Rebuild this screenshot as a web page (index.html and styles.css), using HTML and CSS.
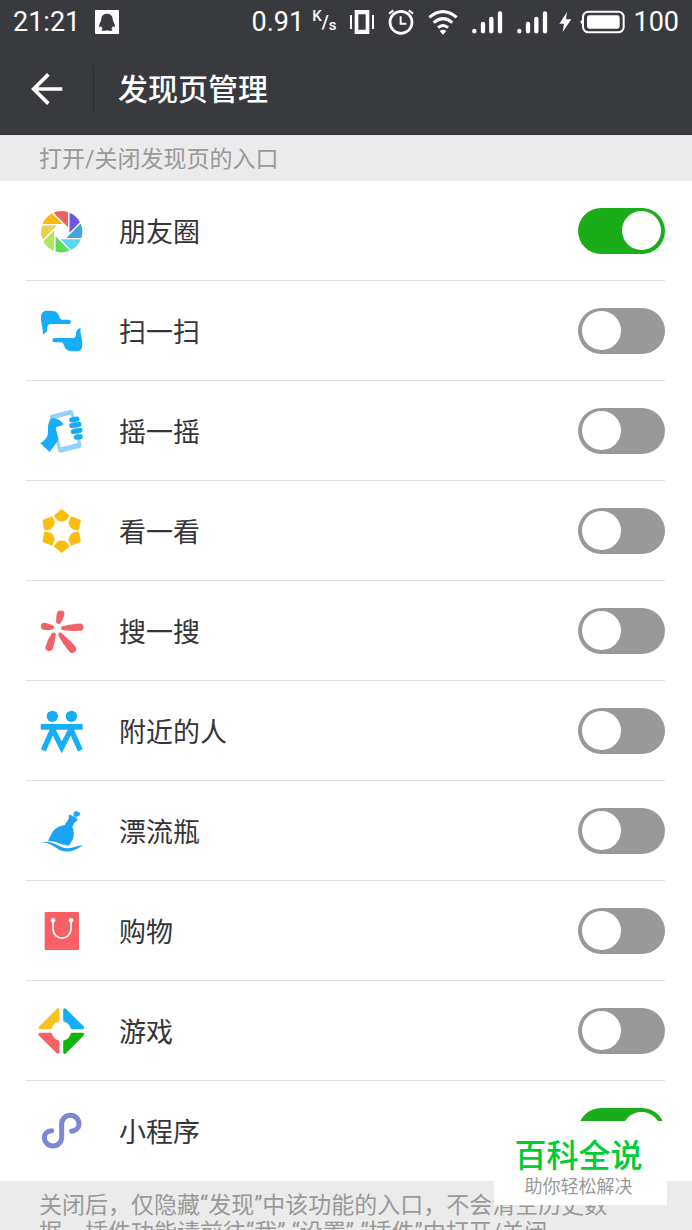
FILE: index.html
```html
<!DOCTYPE html>
<html lang="zh-CN">
<head>
  <meta charset="UTF-8">
  <meta name="viewport" content="width=device-width, initial-scale=1.0">
  <title>发现页管理</title>
  <link rel="stylesheet" href="styles.css">
</head>
<body>
  <div class="app">
    <header class="top">
      <div class="status-bar">
        <span>21:21</span>
        <svg class="qq-icon" width="24" height="24" viewBox="0 0 72 72">
          <rect width="72" height="72" rx="2" fill="#fff"></rect>
          <path d="M36 11c-12 0-17 8-17 17 0 5-7 13-7 22 0 3 3 2 6-2 1 3 3 6 5 8-4 1-5 5-1 6h11l3-2 3 2h11c4-1 3-5-1-6 2-2 4-5 5-8 3 4 6 5 6 2 0-9-7-17-7-22 0-9-5-17-17-17z" fill="#393a3e"></path>
        </svg>
        <div class="status-right">
          <span>0.91</span>
          <span class="speed-unit"><span class="unit-top">K</span><span class="unit-slash">/</span><span class="unit-bottom">s</span></span>
          <svg width="24" height="24" viewBox="0 0 72 72" fill="#fff">
            <path d="M0 15h6v42H0zM66 15h6v42h-6z"></path>
            <path fill-rule="evenodd" d="M14 0h44v72H14zM25 13v46h22V13z"></path>
          </svg>
          <svg class="alarm-icon" width="26" height="26" viewBox="0 0 78 78" fill="none" stroke="#fff" stroke-width="8">
            <circle cx="39" cy="40" r="33"></circle>
            <path d="M38 22v22h17" stroke-width="6"></path>
            <path d="M3 14L16 4M75 14L62 4" stroke-width="6"></path>
          </svg>
          <svg class="wifi-icon" width="30" height="25" viewBox="0 0 90 75" fill="none" stroke="#fff" stroke-width="9">
            <path d="M4 22Q45-12 86 22M17 38Q45 14 73 38M30 53Q45 40 60 53"></path>
            <path d="M35 63Q45 55 55 63L45 74z" fill="#fff" stroke="none"></path>
          </svg>
          <svg class="signal" width="31" height="23" viewBox="0 0 93 69" stroke="#fff" stroke-width="13" stroke-linecap="round">
            <path d="M7 60v1M33 39v22M58 24v37M84 7v54"></path>
          </svg>
          <svg class="signal" width="31" height="23" viewBox="0 0 93 69" stroke="#fff" stroke-width="13" stroke-linecap="round">
            <path d="M7 60v1M33 39v22M58 24v37M84 7v54"></path>
          </svg>
          <svg class="bolt" width="13" height="20" viewBox="0 0 39 60" fill="#fff">
            <path d="M24 0L1 35h14L11 60 37 22H21z"></path>
          </svg>
          <svg class="battery" width="45" height="24" viewBox="0 0 135 72">
            <path d="M9 24L1 36l8 12z" fill="#fff"></path>
            <rect x="9" y="5" width="122" height="62" rx="16" fill="none" stroke="#fff" stroke-width="6"></rect>
            <rect x="21" y="16" width="98" height="40" rx="7" fill="#fff"></rect>
          </svg>
          <span>100</span>
        </div>
      </div>
      <div class="title-bar">
        <button class="back" type="button" aria-label="返回">
          <svg width="32" height="32" viewBox="0 0 96 96" fill="none" stroke="#fff" stroke-width="11">
            <path d="M52 4L8 48l44 44M8 48h86"></path>
          </svg>
        </button>
        <h1>发现页管理</h1>
      </div>
    </header>

    <main>
      <p class="hint">打开/关闭发现页的入口</p>
      <ul class="list">
        <li class="row">
          <svg class="icon" viewBox="0 0 138 138">
            <defs><path id="blade" d="M21 8.700V-60.500A64 64 0 0 1 57.600-27.900z"></path></defs>
            <g transform="translate(71 71)" stroke="#fff" stroke-width="4">
              <use href="#blade" fill="#7055df"></use>
              <use href="#blade" fill="#3fa5df" transform="rotate(45)"></use>
              <use href="#blade" fill="#5bd8ea" transform="rotate(90)"></use>
              <use href="#blade" fill="#59df5c" transform="rotate(135)"></use>
              <use href="#blade" fill="#aee85c" transform="rotate(180)"></use>
              <use href="#blade" fill="#e8d350" transform="rotate(225)"></use>
              <use href="#blade" fill="#f9b916" transform="rotate(270)"></use>
              <use href="#blade" fill="#ee6062" transform="rotate(315)"></use>
            </g>
          </svg>
          <label for="moments">朋友圈</label>
          <input class="switch" type="checkbox" id="moments" checked>
        </li>
        <li class="row">
          <svg class="icon" viewBox="0 0 138 138" fill="#18adf7">
            <path id="hand" d="M14 79C17 64 9 49 9 31 9 14 14 8 27 8c14 0 25-1 33 9 5 7 4 14 10 18h22c9 0 9 13 0 13H43c-12 0-15 3-15 13 0 9-4 15-14 18z"></path>
            <use href="#hand" transform="rotate(180 71 69)"></use>
          </svg>
          <label for="scan">扫一扫</label>
          <input class="switch" type="checkbox" id="scan">
        </li>
        <li class="row">
          <svg class="icon" viewBox="0 0 138 138" fill="#18adf7">
            <g transform="rotate(-14 83 70)">
              <rect x="47" y="11" width="72" height="118" rx="9" fill="#94d3f7"></rect>
              <rect x="57" y="25" width="53" height="88" fill="#fff"></rect>
            </g>
            <path d="M39 32C51 27 68 35 76 48c-7 9-18 5-22 11-4 10 11 27 5 40L35 132 7 106c16-11 23-20 23-35 0-11-2-25 9-39z"></path>
            <g stroke="#18adf7" stroke-width="15" stroke-linecap="round">
              <path d="M101 36l16-3M101 53l22-4M106 71l20-4M115 88l12-2"></path>
            </g>
          </svg>
          <label for="shake">摇一摇</label>
          <input class="switch" type="checkbox" id="shake">
        </li>
        <li class="row">
          <svg class="icon" viewBox="0 0 138 138">
            <defs><path id="petal" d="M0-65L23-46 12-32Q0-26-12-32L-23-46z"></path></defs>
            <g transform="translate(71 69)" fill="#fabd0b" stroke="#fabd0b" stroke-width="2" stroke-linejoin="round">
              <use href="#petal"></use>
              <use href="#petal" transform="rotate(60)"></use>
              <use href="#petal" transform="rotate(120)"></use>
              <use href="#petal" transform="rotate(180)"></use>
              <use href="#petal" transform="rotate(240)"></use>
              <use href="#petal" transform="rotate(300)"></use>
            </g>
          </svg>
          <label for="look">看一看</label>
          <input class="switch" type="checkbox" id="look">
        </li>
        <li class="row">
          <svg class="icon" viewBox="0 0 138 138" fill="#f06268" stroke="#f06268" stroke-width="7" stroke-linejoin="round">
            <path d="M61 14c2-5 15-4 15 3 0 8-6 16-10 25-2 4-8 3-8-1 0-9 0-20 3-27z"></path>
            <path d="M16 48c8-2 18 3 26 7 4 2 3 6-1 7-10 1-20 2-26-1-5-3-4-11 1-13z"></path>
            <path d="M75 58c17-4 37-8 51-8 9 0 9 15 0 15-15 1-35 0-51-2-3-1-3-4 0-5z"></path>
            <path d="M43 79c3-4 8-2 7 3-2 13-5 28-9 39-3 8-17 5-15-4 3-12 10-27 17-38z"></path>
            <path d="M67 77c12 10 30 26 42 40 7 9-5 19-12 12C85 115 73 97 65 82c-1-4 0-6 2-5z"></path>
          </svg>
          <label for="search">搜一搜</label>
          <input class="switch" type="checkbox" id="search">
        </li>
        <li class="row">
          <svg class="icon" viewBox="0 0 138 138" fill="#18adf7">
            <circle cx="43" cy="25" r="17"></circle>
            <circle cx="100" cy="25" r="17"></circle>
            <rect x="8" y="48" width="126" height="17" rx="3"></rect>
            <path d="M16 127L44 64l27 54 28-54 28 63" fill="none" stroke="#18adf7" stroke-width="16"></path>
          </svg>
          <label for="nearby">附近的人</label>
          <input class="switch" type="checkbox" id="nearby">
        </li>
        <li class="row">
          <svg class="icon" viewBox="0 0 138 138" fill="#18a4f2">
            <path d="M107 13l9-5 3 5 6 0 1 8-10 5 0 4-9-6z"></path>
            <path d="M94 19l25 14-4 8-4 0-8 15c6 14 6 28 0 40l-10 17c-18-2-34-12-63-15 4-8 8-15 12-23 7-13 21-21 38-24l13-20-1-3z"></path>
            <path d="M5 103c42-9 61 20 85 18 15-1 29-8 45-10-26 20-48 24-68 16C46 116 34 101 5 103z"></path>
          </svg>
          <label for="bottle">漂流瓶</label>
          <input class="switch" type="checkbox" id="bottle">
        </li>
        <li class="row">
          <svg class="icon" viewBox="0 0 138 138">
            <rect x="20" y="12" width="103" height="114" rx="4" fill="#f76064"></rect>
            <path d="M45 37v24c0 39 54 39 54 0V37" fill="none" stroke="#fff" stroke-width="5"></path>
            <circle cx="45" cy="37" r="7" fill="#fff"></circle>
            <circle cx="99" cy="37" r="7" fill="#fff"></circle>
          </svg>
          <label for="shopping">购物</label>
          <input class="switch" type="checkbox" id="shopping">
        </li>
        <li class="row">
          <svg class="icon" viewBox="0 0 138 138">
            <defs><path id="quarter" d="M-10-64V-32A32 32 0 0 0-32-10H-64z"></path></defs>
            <g transform="translate(70 69)" stroke-width="9" stroke-linejoin="round">
              <use href="#quarter" fill="#fac21e" stroke="#fac21e"></use>
              <use href="#quarter" fill="#18adf7" stroke="#18adf7" transform="rotate(90)"></use>
              <use href="#quarter" fill="#10b510" stroke="#10b510" transform="rotate(180)"></use>
              <use href="#quarter" fill="#f76064" stroke="#f76064" transform="rotate(270)"></use>
            </g>
          </svg>
          <label for="games">游戏</label>
          <input class="switch" type="checkbox" id="games">
        </li>
        <li class="row">
          <svg class="icon" viewBox="0 0 138 138" fill="none" stroke="#7d87d5" stroke-width="15" stroke-linecap="round">
            <path d="M41 68C28 69 19 77 19 88a26 26 0 0 0 52 0V48a26 26 0 0 1 52 0c0 11-9 20-22 22"></path>
          </svg>
          <label for="mini">小程序</label>
          <input class="switch" type="checkbox" id="mini" checked>
        </li>
      </ul>
      <p class="note">关闭后，仅隐藏“发现”中该功能的入口，不会清空历史数据。插件功能请前往“我”-“设置”-“插件”中打开/关闭</p>
    </main>

    <aside class="watermark">
      <strong>百科全说</strong>
      <span>助你轻松解决</span>
    </aside>
  </div>
</body>
</html>
```
FILE: styles.css
```css
* {
  margin: 0;
  padding: 0;
  box-sizing: border-box;
}

body {
  font-family: Roboto, "Noto Sans CJK SC", sans-serif;
  background-color: #ebebeb;
  color: #353535;
}

.app {
  position: relative;
  height: 100vh;
  overflow: hidden;
}

.top {
  background-color: #393a3e;
  border-bottom: 1px solid #2e2f32;
  color: #fff;
}

.status-bar {
  display: flex;
  align-items: center;
  height: 44px;
  padding: 0 13px;
  font-size: 27px;
  font-weight: 400;
  line-height: 44px;
}

.qq-icon {
  margin-left: 15px;
}

.status-right {
  display: flex;
  align-items: center;
  gap: 14px;
  margin-left: auto;
}

.speed-unit {
  display: flex;
  align-items: center;
  margin-left: -6px;
  font-size: 15px;
  font-weight: 500;
  line-height: 20px;
}

.unit-top {
  padding-bottom: 12px;
}

.unit-slash {
  font-size: 18px;
}

.unit-bottom {
  padding-top: 6px;
}

.bolt {
  margin-left: -3px;
  margin-right: -6px;
}

.battery {
  margin-right: -6px;
}

.title-bar {
  display: flex;
  align-items: center;
  height: 90px;
}

.back {
  display: flex;
  align-items: center;
  width: 94px;
  height: 48px;
  padding-left: 31px;
  border: none;
  border-right: 1px solid #2e2f33;
  background: none;
  cursor: pointer;
}

h1 {
  padding-top: 2px;
  padding-left: 24px;
  font-size: 30px;
  font-weight: 500;
  line-height: 40px;
}

.hint {
  padding: 4px 39px 0;
  font-size: 23px;
  line-height: 42px;
  color: #999;
}

.list {
  padding: 0 27px 0 26px;
  background-color: #fff;
  list-style: none;
}

.row {
  display: flex;
  align-items: center;
  height: 100px;
  padding-left: 12px;
  border-bottom: 1px solid #e2e2e2;
}

.row:last-child {
  border-bottom: none;
}

.icon {
  width: 46px;
  height: 46px;
}

.row label {
  flex: 1;
  padding-top: 4px;
  padding-left: 35px;
  font-size: 27px;
  line-height: 40px;
}

.switch {
  display: flex;
  align-items: center;
  width: 87px;
  height: 46px;
  padding: 0 4px;
  border-radius: 23px;
  background-color: #999;
  appearance: none;
  cursor: pointer;
}

.switch::before {
  content: "";
  width: 39px;
  height: 39px;
  border-radius: 50%;
  background-color: #fff;
}

.switch:checked {
  justify-content: flex-end;
  background-color: #1aad19;
}

.note {
  padding: 11px 64px 10px 39px;
  font-size: 23px;
  line-height: 27px;
  color: #999;
}

.watermark {
  position: absolute;
  right: 25px;
  bottom: 25px;
  display: flex;
  flex-direction: column;
  align-items: center;
  width: 173px;
  height: 84px;
  padding-top: 16px;
  padding-right: 4px;
  background-color: #fff;
}

.watermark strong {
  font-size: 32px;
  font-weight: 500;
  line-height: 38px;
  color: #0c3;
}

.watermark span {
  font-size: 18px;
  line-height: 24px;
  color: #999;
}
```
